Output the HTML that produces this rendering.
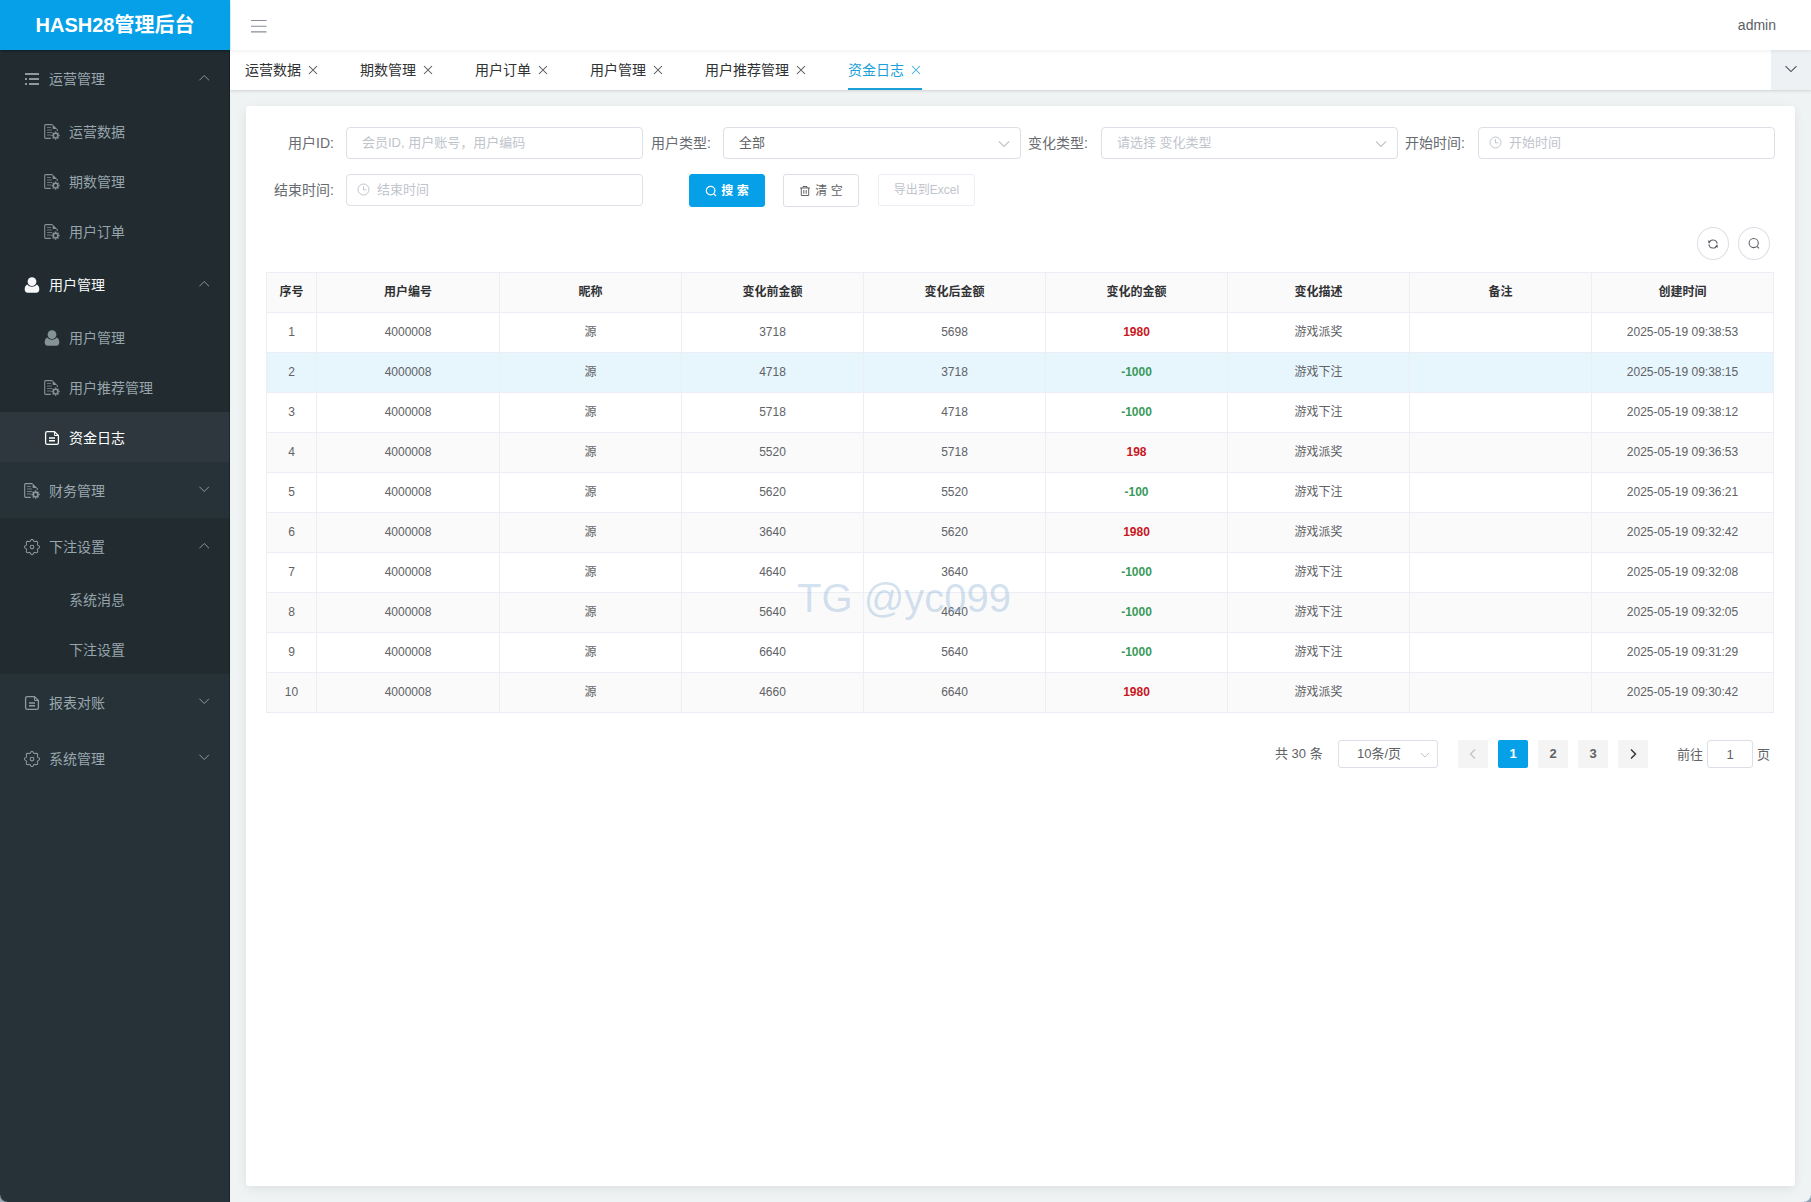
<!DOCTYPE html>
<html lang="zh-CN">
<head>
<meta charset="utf-8">
<title>HASH28管理后台</title>
<style>
*{box-sizing:border-box;margin:0;padding:0}
html,body{width:1811px;height:1202px;overflow:hidden}
body{font-family:"Liberation Sans","Noto Sans CJK SC",sans-serif;font-size:14px;color:#606266;background:#f0f3f4;position:relative}
svg{display:block}
/* sidebar */
#side{position:absolute;left:0;top:0;width:230px;height:1202px;background:#263238;z-index:5}
#side:after{content:"";position:absolute;right:0;top:50px;bottom:0;width:1px;background:rgba(0,0,0,.28)}
#logo{height:50px;background:#05a0e8;color:#fff;font-weight:bold;font-size:20px;line-height:50px;text-align:center;box-shadow:0 2px 2px -1px rgba(0,21,41,.6);position:relative;z-index:2}
.grp{background:#263238}
.grp.open{background:#212b30}
.mt{height:56px;line-height:58px;position:relative;color:#99a6ad;font-size:14px;padding-left:49px;white-space:nowrap}
.mt.on{color:#f6f7f8}
.mt .ic{position:absolute;left:24px;top:21px;width:16px;height:16px;opacity:.9}
.mt.on .ic{opacity:1}
.mt .ar{position:absolute;left:198px;top:72px;margin-top:-50px;width:12px;height:12px}
.mi{height:50px;line-height:52px;position:relative;color:#97a4ab;font-size:14px;padding-left:69px;white-space:nowrap}
.mi .ic{position:absolute;left:44px;top:18px;width:16px;height:16px;opacity:.85}
.mi.act .ic{opacity:1}
.mi.act{background:#2d373d;color:#fff}
/* header */
#hdr{position:absolute;left:230px;top:0;width:1581px;height:50px;background:#fff;box-shadow:0 1px 4px rgba(0,21,41,.08);z-index:3}
#hdr:before{content:"";position:absolute;left:0;top:0;width:1px;height:50px;background:#d6fbff}
#hdr .ham{position:absolute;left:21px;top:19px}
#hdr .user{position:absolute;right:35px;top:0;line-height:50px;font-size:14px;color:#5a5e66}
#tabs{position:absolute;left:230px;top:50px;width:1581px;height:40px;background:#fff;box-shadow:0 1px 3px 0 rgba(0,0,0,.12),0 0 3px 0 rgba(0,0,0,.04);z-index:2}
.tab{position:absolute;top:0;height:40px;line-height:40px;font-size:14px;color:#303133;white-space:nowrap}
.tab .x{display:inline-block;margin-left:7px;font-size:12px;width:10px;height:10px;position:relative;top:0}
.tab.act{color:#1a9fd9}
.tab.act:after{content:"";position:absolute;left:0;right:0;bottom:0;height:2px;background:#1a9fd9}
#tabmore{position:absolute;right:0;top:0;width:40px;height:40px;background:#eef1f3}
/* card */
#card{position:absolute;left:246px;top:106px;width:1549px;height:1080px;background:#fff;border-radius:3px;box-shadow:0 3px 12px -1px rgba(0,0,0,.09)}
.lbl{position:absolute;width:80px;text-align:right;padding-right:12px;font-size:14px;color:#686b70;line-height:32px;height:32px;white-space:nowrap}
.inp{position:absolute;width:297px;height:32px;border:1px solid #dcdfe6;border-radius:4px;background:#fff;font-size:13px;color:#c0c4cc;line-height:30px;padding-left:15px;white-space:nowrap}
.inp.sel{color:#606266}
.inp.ph{color:#c0c4cc}
.inp .dn{position:absolute;right:10px;top:10px}
.inp.date{padding-left:30px}
.inp.date .clk{position:absolute;left:10px;top:8px}
.btn{position:absolute;height:33px;border-radius:3px;font-size:12px;line-height:32px;border:1px solid #dcdfe6;background:#fff;color:#606266;text-align:center;white-space:nowrap}
.btn.pri{background:#05a0e8;border-color:#05a0e8;color:#fff}
.btn.dis{color:#c0c4cc;border-color:#ebeef5}
.cbtn{position:absolute;width:32px;height:33px;border-radius:50%;border:1px solid #dcdfe6;background:#fff}
/* table */
#tbl{position:absolute;left:266px;top:272px;width:1508px;border-collapse:separate;border-spacing:0;table-layout:fixed;font-size:12px;color:#606266;border-top:1px solid #ebeef5;border-left:1px solid #ebeef5}
#tbl th,#tbl td{height:40px;border-right:1px solid #ebeef5;border-bottom:1px solid #ebeef5;text-align:center;padding:0 0 2px 0;font-weight:normal;white-space:nowrap;line-height:20px}
#tbl th{background:#fafafa;color:#303133;font-weight:bold}
#tbl tr.s td{background:#fafafa}
#tbl tr.h td{background:#e7f5fc}
#tbl td.r{color:#c9171e;font-weight:bold}
#tbl td.g{color:#3a9a5c;font-weight:bold}
/* pagination */
.pg{position:absolute;font-size:13px;color:#606266;white-space:nowrap}
.pb{position:absolute;top:740px;width:30px;height:28px;line-height:28px;border-radius:2px;background:#f4f4f5;color:#606266;font-size:13px;font-weight:bold;text-align:center}
.pb.act{background:#05a0e8;color:#fff}
#wm{position:absolute;left:797px;top:576px;font-size:40px;line-height:44px;color:rgba(120,165,210,.32);white-space:nowrap;z-index:4;font-family:"Liberation Sans",sans-serif}
</style>
</head>
<body>

<div id="side">
<div id="logo">HASH28管理后台</div>
<div class="grp open"><div class="mt"><svg class="ic" viewBox="0 0 16 16"><path d="M1 2h14v2H1zM1 7h2v2H1zM5 7h10v2H5zM1 12h2v2H1zM5 12h10v2H5z" fill="currentColor"/></svg>运营管理<svg class="ar" viewBox="0 0 12 12"><path d="M1.400 8.300L6.200 3.500l4.800 4.800" fill="none" stroke="#8c989e" stroke-width="1"/></svg></div><div class="mi"><svg class="ic" viewBox="0 0 16 16"><path d="M8.6 0.6H1.6a.9.9 0 0 0-.9.9v12a.9.9 0 0 0 .9.9h5.2" fill="none" stroke="currentColor" stroke-width="1.1"/><path d="M8.6 0.4l4.6 4.6H9.4a.8.8 0 0 1-.8-.8z" fill="currentColor"/><path d="M13.2 5v2" fill="none" stroke="currentColor" stroke-width="1.1"/><path d="M3 3.5h4M3 6h5M3 8.500h5M3 11h4" stroke="currentColor" stroke-width="1" opacity=".75"/><circle cx="11.600" cy="11.600" r="2.300" fill="none" stroke="currentColor" stroke-width="1.500"/><path d="M11.600 7.500v1.400M11.600 14.300v1.400M7.500 11.600h1.400M14.300 11.600h1.400M8.700 8.700l1 1M13.500 13.500l1 1M8.700 14.500l1-1M13.500 9.700l1-1" stroke="currentColor" stroke-width="1.500"/></svg>运营数据</div><div class="mi"><svg class="ic" viewBox="0 0 16 16"><path d="M8.6 0.6H1.6a.9.9 0 0 0-.9.9v12a.9.9 0 0 0 .9.9h5.2" fill="none" stroke="currentColor" stroke-width="1.1"/><path d="M8.6 0.4l4.6 4.6H9.4a.8.8 0 0 1-.8-.8z" fill="currentColor"/><path d="M13.2 5v2" fill="none" stroke="currentColor" stroke-width="1.1"/><path d="M3 3.5h4M3 6h5M3 8.500h5M3 11h4" stroke="currentColor" stroke-width="1" opacity=".75"/><circle cx="11.600" cy="11.600" r="2.300" fill="none" stroke="currentColor" stroke-width="1.500"/><path d="M11.600 7.500v1.400M11.600 14.300v1.400M7.500 11.600h1.400M14.300 11.600h1.400M8.700 8.700l1 1M13.500 13.500l1 1M8.700 14.500l1-1M13.500 9.700l1-1" stroke="currentColor" stroke-width="1.500"/></svg>期数管理</div><div class="mi"><svg class="ic" viewBox="0 0 16 16"><path d="M8.6 0.6H1.6a.9.9 0 0 0-.9.9v12a.9.9 0 0 0 .9.9h5.2" fill="none" stroke="currentColor" stroke-width="1.1"/><path d="M8.6 0.4l4.6 4.6H9.4a.8.8 0 0 1-.8-.8z" fill="currentColor"/><path d="M13.2 5v2" fill="none" stroke="currentColor" stroke-width="1.1"/><path d="M3 3.5h4M3 6h5M3 8.500h5M3 11h4" stroke="currentColor" stroke-width="1" opacity=".75"/><circle cx="11.600" cy="11.600" r="2.300" fill="none" stroke="currentColor" stroke-width="1.500"/><path d="M11.600 7.500v1.400M11.600 14.300v1.400M7.500 11.600h1.400M14.300 11.600h1.400M8.700 8.700l1 1M13.500 13.500l1 1M8.700 14.500l1-1M13.500 9.700l1-1" stroke="currentColor" stroke-width="1.500"/></svg>用户订单</div></div>
<div class="grp open"><div class="mt on"><svg class="ic" viewBox="0 0 16 16"><circle cx="8" cy="4.600" r="4.400" fill="currentColor"/><path d="M3.300 7.600c1.200 1.500 2.800 2.200 4.700 2.200s3.500-.7 4.700-2.200c1.600.8 2.600 2.400 2.600 4.700 0 2.300-1.100 3.500-3 3.500H3.700c-1.900 0-3-1.200-3-3.500 0-2.300 1-3.900 2.600-4.700z" fill="currentColor"/></svg>用户管理<svg class="ar" viewBox="0 0 12 12"><path d="M1.400 8.300L6.200 3.500l4.800 4.800" fill="none" stroke="#8c989e" stroke-width="1"/></svg></div><div class="mi"><svg class="ic" viewBox="0 0 16 16"><circle cx="8" cy="4.600" r="4.400" fill="currentColor"/><path d="M3.300 7.600c1.200 1.500 2.800 2.200 4.700 2.200s3.500-.7 4.700-2.200c1.600.8 2.600 2.400 2.600 4.700 0 2.300-1.100 3.500-3 3.500H3.700c-1.900 0-3-1.200-3-3.500 0-2.300 1-3.900 2.600-4.700z" fill="currentColor"/></svg>用户管理</div><div class="mi"><svg class="ic" viewBox="0 0 16 16"><path d="M8.6 0.6H1.6a.9.9 0 0 0-.9.9v12a.9.9 0 0 0 .9.9h5.2" fill="none" stroke="currentColor" stroke-width="1.1"/><path d="M8.6 0.4l4.6 4.6H9.4a.8.8 0 0 1-.8-.8z" fill="currentColor"/><path d="M13.2 5v2" fill="none" stroke="currentColor" stroke-width="1.1"/><path d="M3 3.5h4M3 6h5M3 8.500h5M3 11h4" stroke="currentColor" stroke-width="1" opacity=".75"/><circle cx="11.600" cy="11.600" r="2.300" fill="none" stroke="currentColor" stroke-width="1.500"/><path d="M11.600 7.500v1.400M11.600 14.300v1.400M7.500 11.600h1.400M14.300 11.600h1.400M8.700 8.700l1 1M13.500 13.500l1 1M8.700 14.500l1-1M13.500 9.700l1-1" stroke="currentColor" stroke-width="1.500"/></svg>用户推荐管理</div><div class="mi act"><svg class="ic" viewBox="0 0 16 16"><path d="M10.500 1.600H3.200c-.9 0-1.600.7-1.600 1.600v9.600c0 .9.700 1.600 1.600 1.600h9.600c.9 0 1.600-.7 1.600-1.600V5.500z" fill="none" stroke="currentColor" stroke-width="1.300" stroke-linejoin="round"/><path d="M10.500 1.600v3.100c0 .5.300.8.800.8h3.100" fill="none" stroke="currentColor" stroke-width="1.100"/><path d="M5 8h6M5 10.800h6" stroke="currentColor" stroke-width="1.400"/></svg>资金日志</div></div>
<div class="grp"><div class="mt"><svg class="ic" viewBox="0 0 16 16"><path d="M8.6 0.6H1.6a.9.9 0 0 0-.9.9v12a.9.9 0 0 0 .9.9h5.2" fill="none" stroke="currentColor" stroke-width="1.1"/><path d="M8.6 0.4l4.6 4.6H9.4a.8.8 0 0 1-.8-.8z" fill="currentColor"/><path d="M13.2 5v2" fill="none" stroke="currentColor" stroke-width="1.1"/><path d="M3 3.5h4M3 6h5M3 8.500h5M3 11h4" stroke="currentColor" stroke-width="1" opacity=".75"/><circle cx="11.600" cy="11.600" r="2.300" fill="none" stroke="currentColor" stroke-width="1.500"/><path d="M11.600 7.500v1.400M11.600 14.300v1.400M7.500 11.600h1.400M14.300 11.600h1.400M8.700 8.700l1 1M13.500 13.500l1 1M8.700 14.500l1-1M13.500 9.700l1-1" stroke="currentColor" stroke-width="1.500"/></svg>财务管理<svg class="ar" viewBox="0 0 12 12"><path d="M1.400 2.700L6.200 7.500l4.800-4.800" fill="none" stroke="#8c989e" stroke-width="1"/></svg></div></div>
<div class="grp open"><div class="mt"><svg class="ic" viewBox="0 0 16 16"><path d="M8.00 0.40 L8.49 0.53 L8.94 0.89 L9.32 1.38 L9.64 1.89 L9.93 2.31 L10.26 2.55 L10.66 2.61 L11.16 2.52 L11.75 2.39 L12.37 2.31 L12.94 2.37 L13.37 2.63 L13.63 3.06 L13.69 3.63 L13.61 4.25 L13.48 4.84 L13.39 5.34 L13.45 5.74 L13.69 6.07 L14.11 6.36 L14.62 6.68 L15.11 7.06 L15.47 7.51 L15.60 8.00 L15.47 8.49 L15.11 8.94 L14.62 9.32 L14.11 9.64 L13.69 9.93 L13.45 10.26 L13.39 10.66 L13.48 11.16 L13.61 11.75 L13.69 12.37 L13.63 12.94 L13.37 13.37 L12.94 13.63 L12.37 13.69 L11.75 13.61 L11.16 13.48 L10.66 13.39 L10.26 13.45 L9.93 13.69 L9.64 14.11 L9.32 14.62 L8.94 15.11 L8.49 15.47 L8.00 15.60 L7.51 15.47 L7.06 15.11 L6.68 14.62 L6.36 14.11 L6.07 13.69 L5.74 13.45 L5.34 13.39 L4.84 13.48 L4.25 13.61 L3.63 13.69 L3.06 13.63 L2.63 13.37 L2.37 12.94 L2.31 12.37 L2.39 11.75 L2.52 11.16 L2.61 10.66 L2.55 10.26 L2.31 9.93 L1.89 9.64 L1.38 9.32 L0.89 8.94 L0.53 8.49 L0.40 8.00 L0.53 7.51 L0.89 7.06 L1.38 6.68 L1.89 6.36 L2.31 6.07 L2.55 5.74 L2.61 5.34 L2.52 4.84 L2.39 4.25 L2.31 3.63 L2.37 3.06 L2.63 2.63 L3.06 2.37 L3.63 2.31 L4.25 2.39 L4.84 2.52 L5.34 2.61 L5.74 2.55 L6.07 2.31 L6.36 1.89 L6.68 1.38 L7.06 0.89 L7.51 0.53Z" fill="none" stroke="currentColor" stroke-width="1.050" stroke-linejoin="round"/><circle cx="8" cy="8" r="1.850" fill="none" stroke="currentColor" stroke-width="1.050"/></svg>下注设置<svg class="ar" viewBox="0 0 12 12"><path d="M1.400 8.300L6.200 3.500l4.800 4.800" fill="none" stroke="#8c989e" stroke-width="1"/></svg></div><div class="mi">系统消息</div><div class="mi">下注设置</div></div>
<div class="grp"><div class="mt"><svg class="ic" viewBox="0 0 16 16"><path d="M10.500 1.600H3.200c-.9 0-1.600.7-1.600 1.600v9.600c0 .9.700 1.600 1.600 1.600h9.600c.9 0 1.600-.7 1.600-1.600V5.500z" fill="none" stroke="currentColor" stroke-width="1.300" stroke-linejoin="round"/><path d="M10.500 1.600v3.100c0 .5.300.8.800.8h3.100" fill="none" stroke="currentColor" stroke-width="1.100"/><path d="M5 8h6M5 10.800h6" stroke="currentColor" stroke-width="1.400"/></svg>报表对账<svg class="ar" viewBox="0 0 12 12"><path d="M1.400 2.700L6.200 7.500l4.800-4.800" fill="none" stroke="#8c989e" stroke-width="1"/></svg></div></div>
<div class="grp"><div class="mt"><svg class="ic" viewBox="0 0 16 16"><path d="M8.00 0.40 L8.49 0.53 L8.94 0.89 L9.32 1.38 L9.64 1.89 L9.93 2.31 L10.26 2.55 L10.66 2.61 L11.16 2.52 L11.75 2.39 L12.37 2.31 L12.94 2.37 L13.37 2.63 L13.63 3.06 L13.69 3.63 L13.61 4.25 L13.48 4.84 L13.39 5.34 L13.45 5.74 L13.69 6.07 L14.11 6.36 L14.62 6.68 L15.11 7.06 L15.47 7.51 L15.60 8.00 L15.47 8.49 L15.11 8.94 L14.62 9.32 L14.11 9.64 L13.69 9.93 L13.45 10.26 L13.39 10.66 L13.48 11.16 L13.61 11.75 L13.69 12.37 L13.63 12.94 L13.37 13.37 L12.94 13.63 L12.37 13.69 L11.75 13.61 L11.16 13.48 L10.66 13.39 L10.26 13.45 L9.93 13.69 L9.64 14.11 L9.32 14.62 L8.94 15.11 L8.49 15.47 L8.00 15.60 L7.51 15.47 L7.06 15.11 L6.68 14.62 L6.36 14.11 L6.07 13.69 L5.74 13.45 L5.34 13.39 L4.84 13.48 L4.25 13.61 L3.63 13.69 L3.06 13.63 L2.63 13.37 L2.37 12.94 L2.31 12.37 L2.39 11.75 L2.52 11.16 L2.61 10.66 L2.55 10.26 L2.31 9.93 L1.89 9.64 L1.38 9.32 L0.89 8.94 L0.53 8.49 L0.40 8.00 L0.53 7.51 L0.89 7.06 L1.38 6.68 L1.89 6.36 L2.31 6.07 L2.55 5.74 L2.61 5.34 L2.52 4.84 L2.39 4.25 L2.31 3.63 L2.37 3.06 L2.63 2.63 L3.06 2.37 L3.63 2.31 L4.25 2.39 L4.84 2.52 L5.34 2.61 L5.74 2.55 L6.07 2.31 L6.36 1.89 L6.68 1.38 L7.06 0.89 L7.51 0.53Z" fill="none" stroke="currentColor" stroke-width="1.050" stroke-linejoin="round"/><circle cx="8" cy="8" r="1.850" fill="none" stroke="currentColor" stroke-width="1.050"/></svg>系统管理<svg class="ar" viewBox="0 0 12 12"><path d="M1.400 2.700L6.200 7.500l4.800-4.800" fill="none" stroke="#8c989e" stroke-width="1"/></svg></div></div>
</div>
<div id="hdr"><svg class="ham" width="16" height="14" viewBox="0 0 16 14"><path d="M0 1.500h15.500M0 7.300h15.500M0 12.900h15.500" stroke="#878d99" stroke-width="1.100" fill="none"/></svg><div class="user">admin</div></div>
<div id="tabs"><div class="tab" style="left:15px;width:72px">运营数据<svg class="x" viewBox="0 0 10 10"><path d="M1 1l8 8M9 1l-8 8" stroke="currentColor" stroke-width="1.050" fill="none" opacity=".85"/></svg></div><div class="tab" style="left:130px;width:72px">期数管理<svg class="x" viewBox="0 0 10 10"><path d="M1 1l8 8M9 1l-8 8" stroke="currentColor" stroke-width="1.050" fill="none" opacity=".85"/></svg></div><div class="tab" style="left:245px;width:72px">用户订单<svg class="x" viewBox="0 0 10 10"><path d="M1 1l8 8M9 1l-8 8" stroke="currentColor" stroke-width="1.050" fill="none" opacity=".85"/></svg></div><div class="tab" style="left:360px;width:72px">用户管理<svg class="x" viewBox="0 0 10 10"><path d="M1 1l8 8M9 1l-8 8" stroke="currentColor" stroke-width="1.050" fill="none" opacity=".85"/></svg></div><div class="tab" style="left:475px;width:100px">用户推荐管理<svg class="x" viewBox="0 0 10 10"><path d="M1 1l8 8M9 1l-8 8" stroke="currentColor" stroke-width="1.050" fill="none" opacity=".85"/></svg></div><div class="tab act" style="left:618px;width:74px">资金日志<svg class="x" viewBox="0 0 10 10"><path d="M1 1l8 8M9 1l-8 8" stroke="currentColor" stroke-width="1.050" fill="none" opacity=".85"/></svg></div><div id="tabmore"><svg width="14" height="14" viewBox="0 0 14 14" style="position:absolute;left:13px;top:12px"><path d="M1.500 4.200L7 9.600l5.500-5.400" fill="none" stroke="#4a4f57" stroke-width="1.100"/></svg></div></div>
<div id="card"></div>
<div class="lbl" style="left:266px;top:127px">用户ID:</div><div class="inp" style="left:346px;top:127px">会员ID, 用户账号，用户编码</div><div class="lbl" style="left:643px;top:127px">用户类型:</div><div class="inp sel" style="left:723px;top:127px;width:298px">全部<svg class="dn" width="12" height="12" viewBox="0 0 12 12"><path d="M1 3.500l5 5 5-5" fill="none" stroke="#c0c4cc" stroke-width="1.100"/></svg></div><div class="lbl" style="left:1020px;top:127px">变化类型:</div><div class="inp" style="left:1101px;top:127px">请选择 变化类型<svg class="dn" width="12" height="12" viewBox="0 0 12 12"><path d="M1 3.500l5 5 5-5" fill="none" stroke="#c0c4cc" stroke-width="1.100"/></svg></div><div class="lbl" style="left:1397px;top:127px">开始时间:</div><div class="inp date" style="left:1478px;top:127px"><svg class="clk" width="13" height="13" viewBox="0 0 13 13"><circle cx="6.500" cy="6.500" r="5.500" fill="none" stroke="#c0c4cc" stroke-width="1"/><path d="M6.500 3.200v3.600h2.800" fill="none" stroke="#c0c4cc" stroke-width="1"/></svg>开始时间</div><div class="lbl" style="left:266px;top:174px">结束时间:</div><div class="inp date" style="left:346px;top:174px"><svg class="clk" width="13" height="13" viewBox="0 0 13 13"><circle cx="6.500" cy="6.500" r="5.500" fill="none" stroke="#c0c4cc" stroke-width="1"/><path d="M6.500 3.200v3.600h2.800" fill="none" stroke="#c0c4cc" stroke-width="1"/></svg>结束时间</div><div class="btn pri" style="left:689px;top:174px;width:76px"><b><svg width="12" height="12" viewBox="0 0 12 12" style="display:inline-block;vertical-align:-2px;margin-right:4px"><circle cx="5.600" cy="5.600" r="4.300" fill="none" stroke="currentColor" stroke-width="1.200"/><path d="M8.800 8.800l2.200 2.200" stroke="currentColor" stroke-width="1.200"/></svg>搜 索</b></div><div class="btn" style="left:783px;top:174px;width:76px"><svg width="12" height="12" viewBox="0 0 12 12" style="display:inline-block;vertical-align:-2px;margin-right:4px"><path d="M1 3h10M4 3V1.500h4V3M2.300 3v7.500h7.400V3M4.800 5v3.800M7.200 5v3.800" fill="none" stroke="currentColor" stroke-width="1"/></svg>清 空</div><div class="btn dis" style="left:878px;top:174px;width:97px;height:32px;line-height:31px">导出到Excel</div><div class="cbtn" style="left:1697px;top:227px"><svg width="12" height="12" viewBox="0 0 12 12" style="position:absolute;left:9px;top:10px"><path d="M2 5.200A4.100 4.100 0 0 1 10.100 5.800M10 6.800A4.100 4.100 0 0 1 1.900 6.200" fill="none" stroke="#5a5d63" stroke-width="1.050"/><path d="M1.100 2.300L4 3.500 1.700 5.600zM10.900 9.700L8 8.500l2.300-2.100z" fill="#5a5d63"/></svg></div><div class="cbtn" style="left:1738px;top:227px"><svg width="13" height="13" viewBox="0 0 13 13" style="position:absolute;left:9px;top:9px"><circle cx="5.700" cy="6" r="4.600" fill="none" stroke="#5a5d63" stroke-width="1.050"/><path d="M9 9.300l2 2" stroke="#5a5d63" stroke-width="1.050"/></svg></div>
<table id="tbl"><colgroup><col style="width:50px"><col style="width:183px"><col style="width:182px"><col style="width:182px"><col style="width:182px"><col style="width:182px"><col style="width:182px"><col style="width:182px"><col style="width:182px"></colgroup><tr><th>序号</th><th>用户编号</th><th>昵称</th><th>变化前金额</th><th>变化后金额</th><th>变化的金额</th><th>变化描述</th><th>备注</th><th>创建时间</th></tr><tr class=""><td>1</td><td>4000008</td><td>源</td><td>3718</td><td>5698</td><td class="r">1980</td><td>游戏派奖</td><td></td><td>2025-05-19 09:38:53</td></tr><tr class="h"><td>2</td><td>4000008</td><td>源</td><td>4718</td><td>3718</td><td class="g">-1000</td><td>游戏下注</td><td></td><td>2025-05-19 09:38:15</td></tr><tr class=""><td>3</td><td>4000008</td><td>源</td><td>5718</td><td>4718</td><td class="g">-1000</td><td>游戏下注</td><td></td><td>2025-05-19 09:38:12</td></tr><tr class="s"><td>4</td><td>4000008</td><td>源</td><td>5520</td><td>5718</td><td class="r">198</td><td>游戏派奖</td><td></td><td>2025-05-19 09:36:53</td></tr><tr class=""><td>5</td><td>4000008</td><td>源</td><td>5620</td><td>5520</td><td class="g">-100</td><td>游戏下注</td><td></td><td>2025-05-19 09:36:21</td></tr><tr class="s"><td>6</td><td>4000008</td><td>源</td><td>3640</td><td>5620</td><td class="r">1980</td><td>游戏派奖</td><td></td><td>2025-05-19 09:32:42</td></tr><tr class=""><td>7</td><td>4000008</td><td>源</td><td>4640</td><td>3640</td><td class="g">-1000</td><td>游戏下注</td><td></td><td>2025-05-19 09:32:08</td></tr><tr class="s"><td>8</td><td>4000008</td><td>源</td><td>5640</td><td>4640</td><td class="g">-1000</td><td>游戏下注</td><td></td><td>2025-05-19 09:32:05</td></tr><tr class=""><td>9</td><td>4000008</td><td>源</td><td>6640</td><td>5640</td><td class="g">-1000</td><td>游戏下注</td><td></td><td>2025-05-19 09:31:29</td></tr><tr class="s"><td>10</td><td>4000008</td><td>源</td><td>4660</td><td>6640</td><td class="r">1980</td><td>游戏派奖</td><td></td><td>2025-05-19 09:30:42</td></tr></table>
<div class="pg" style="left:1275px;top:740px;line-height:28px">共 30 条</div><div class="pg" style="left:1338px;top:740px;width:100px;height:28px;border:1px solid #dcdfe6;border-radius:3px;line-height:26px;padding-left:18px">10条/页<svg width="10" height="10" viewBox="0 0 12 12" style="position:absolute;right:7px;top:9px"><path d="M1 3.500l5 5 5-5" fill="none" stroke="#c0c4cc" stroke-width="1.200"/></svg></div><div class="pb" style="left:1458px"><svg width="12" height="12" viewBox="0 0 12 12" style="margin:8px auto"><path d="M8 1.500L3.500 6l4.500 4.500" fill="none" stroke="#c0c4cc" stroke-width="1.400"/></svg></div><div class="pb act" style="left:1498px">1</div><div class="pb" style="left:1538px">2</div><div class="pb" style="left:1578px">3</div><div class="pb" style="left:1618px"><svg width="12" height="12" viewBox="0 0 12 12" style="margin:8px auto"><path d="M4 1.500L8.500 6 4 10.500" fill="none" stroke="#303133" stroke-width="1.400"/></svg></div><div class="pg" style="left:1677px;top:741px;line-height:28px">前往</div><div class="pg" style="left:1707px;top:740px;width:46px;height:28px;border:1px solid #dcdfe6;border-radius:3px;line-height:28px;text-align:center">1</div><div class="pg" style="left:1757px;top:741px;line-height:28px">页</div>
<div style="position:absolute;left:0;bottom:0;width:7px;height:7px;z-index:9;background:radial-gradient(circle at 100% 0,rgba(154,171,184,0) 6px,#9aabb8 7.500px)"></div><div style="position:absolute;right:0;bottom:0;width:7px;height:7px;z-index:9;background:radial-gradient(circle at 0 0,rgba(138,154,171,0) 6px,#8a9aab 7.500px)"></div>
<div id="wm">TG @yc099</div>
</body>
</html>
